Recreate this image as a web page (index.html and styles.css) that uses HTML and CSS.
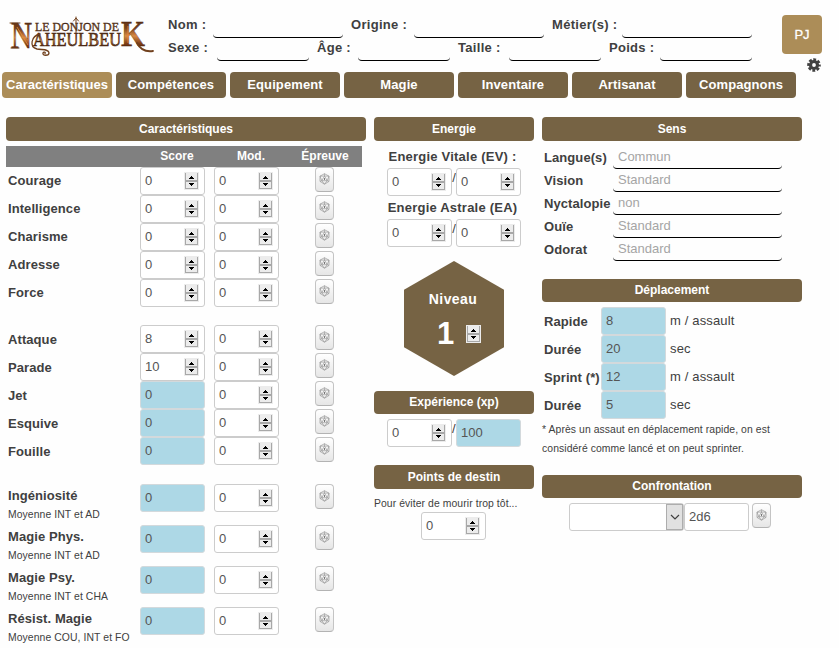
FILE: index.html
```html
<!DOCTYPE html>
<html lang="fr">
<head>
<meta charset="utf-8">
<title>Le Donjon de Naheulbeuk</title>
<link rel="stylesheet" href="styles.css">
</head>
<body>
<svg class="defs" width="0" height="0">
  <symbol id="spin" viewBox="0 0 15 18">
    <path fill="#ececec" d="M0 0h15v18H0z"/>
    <path fill="#a8a8a8" d="M1 1h1v16H1zM13 1h1v16h-1zM1 8h13v2H1zM1 16h13v1H1z"/>
    <path fill="#000" d="M7 4h1v1h1v1h1v1H5V6h1V5h1zM5 11h5v1H9v1H8v1H7v-1H6v-1H5z"/>
  </symbol>
  <symbol id="die" viewBox="0 0 11 12">
    <path fill="none" stroke="#999" stroke-width=".7" d="M5.500 .7 10 3.200v5.200l-4.500 2.800L1 8.400V3.200zM5.500 3 8.200 7.700H2.800zM5.500.7V3M1 3.200 5.500 3 10 3.200 8.200 7.700 10 8.400M1 3.200l1.800 4.500L1 8.400M2.800 7.700l2.700 3.500 2.700-3.500"/>
    <path fill="#777" d="M5 5h1v2H5z"/>
  </symbol>
</svg>

<header class="top">
  <svg class="logo" viewBox="0 0 148 46" width="148" height="46">
    <defs><linearGradient id="fire" x1="0" y1="0" x2="0" y2="1">
      <stop offset="0" stop-color="#4b240e"/><stop offset=".35" stop-color="#7b431b"/><stop offset=".55" stop-color="#d98a45"/><stop offset=".75" stop-color="#7a3a14"/><stop offset="1" stop-color="#2a1208"/>
    </linearGradient></defs>
    <g class="logo-text" fill="url(#fire)">
      <text x="4" y="35" font-size="37" textLength="21" lengthAdjust="spacingAndGlyphs">N</text>
      <text class="logo-mid" x="26" y="33" font-size="19" textLength="88" lengthAdjust="spacingAndGlyphs">AHEULBEU</text>
      <text x="114" y="33" font-size="36" textLength="24" lengthAdjust="spacingAndGlyphs">K</text>
      <text class="logo-small" x="28" y="17.500" font-size="11.500" textLength="84" lengthAdjust="spacingAndGlyphs">LE DONJON DE</text>
    </g>
    <g fill="none" stroke="#70401d" stroke-linecap="round">
      <path stroke-width="1.300" d="M33 21C24 23 22 34 30 36c6 1 12 0 12 4 0 3-7 3-6 0 .5-1.500 3-1 2 .5"/>
      <path stroke-width="1.800" d="M130 30c3 6 9 9 16 8"/>
      <path stroke-width="1" d="M69 4v16M66.500 8 69 5l2.500 3M3 10h10M4 35h8"/>
    </g>
    <path fill="none" stroke="#e98b36" stroke-width=".8" d="m10 14 11 18M121 13v17"/>
  </svg>
  <div class="identity">
    <div class="line"><label class="w45">Nom :</label><i class="long"></i><label class="w71">Origine :</label><i class="long"></i><label class="w78">Métier(s) :</label><i class="long"></i></div>
    <div class="line"><label class="w49">Sexe :</label><i></i><label class="w49 pad">Âge :</label><i></i><label class="w59 pad">Taille :</label><i></i><label class="w59 pad">Poids :</label><i></i></div>
  </div>
  <div class="side">
    <div class="pj">PJ</div>
    <svg class="gear" viewBox="0 0 14 14" width="14" height="14"><path fill="none" stroke="#404040" stroke-width="2.600" stroke-dasharray="2.800 1.520" stroke-dashoffset="1.400" d="M12.500 7A5.500 5.500 0 1 1 1.500 7a5.500 5.500 0 0 1 11 0"/><circle cx="7" cy="7" r="3.500" fill="none" stroke="#404040" stroke-width="3.200"/></svg>
  </div>
</header>

<nav class="tabs"><a class="on">Caractéristiques</a><a>Compétences</a><a>Equipement</a><a>Magie</a><a>Inventaire</a><a>Artisanat</a><a>Compagnons</a></nav>

<main class="sheet">
  <section>
    <h2>Caractéristiques</h2>
    <div class="row thead"><b></b><b>Score</b><b>Mod.</b><b>Épreuve</b></div>
    <div class="group">
      <div class="row"><label>Courage</label><span class="f">0<svg><use href="#spin"/></svg></span><span class="f">0<svg><use href="#spin"/></svg></span><span class="roll"><svg><use href="#die"/></svg></span></div>
      <div class="row"><label>Intelligence</label><span class="f">0<svg><use href="#spin"/></svg></span><span class="f">0<svg><use href="#spin"/></svg></span><span class="roll"><svg><use href="#die"/></svg></span></div>
      <div class="row"><label>Charisme</label><span class="f">0<svg><use href="#spin"/></svg></span><span class="f">0<svg><use href="#spin"/></svg></span><span class="roll"><svg><use href="#die"/></svg></span></div>
      <div class="row"><label>Adresse</label><span class="f">0<svg><use href="#spin"/></svg></span><span class="f">0<svg><use href="#spin"/></svg></span><span class="roll"><svg><use href="#die"/></svg></span></div>
      <div class="row"><label>Force</label><span class="f">0<svg><use href="#spin"/></svg></span><span class="f">0<svg><use href="#spin"/></svg></span><span class="roll"><svg><use href="#die"/></svg></span></div>
    </div>
    <div class="group second">
      <div class="row"><label>Attaque</label><span class="f">8<svg><use href="#spin"/></svg></span><span class="f">0<svg><use href="#spin"/></svg></span><span class="roll"><svg><use href="#die"/></svg></span></div>
      <div class="row"><label>Parade</label><span class="f">10<svg><use href="#spin"/></svg></span><span class="f">0<svg><use href="#spin"/></svg></span><span class="roll"><svg><use href="#die"/></svg></span></div>
      <div class="row"><label>Jet</label><span class="f calc">0</span><span class="f">0<svg><use href="#spin"/></svg></span><span class="roll"><svg><use href="#die"/></svg></span></div>
      <div class="row"><label>Esquive</label><span class="f calc">0</span><span class="f">0<svg><use href="#spin"/></svg></span><span class="roll"><svg><use href="#die"/></svg></span></div>
      <div class="row"><label>Fouille</label><span class="f calc">0</span><span class="f">0<svg><use href="#spin"/></svg></span><span class="roll"><svg><use href="#die"/></svg></span></div>
    </div>
    <div class="group third">
      <div class="row"><label>Ingéniosité<small>Moyenne INT et AD</small></label><span class="f calc">0</span><span class="f">0<svg><use href="#spin"/></svg></span><span class="roll"><svg><use href="#die"/></svg></span></div>
      <div class="row"><label>Magie Phys.<small>Moyenne INT et AD</small></label><span class="f calc">0</span><span class="f">0<svg><use href="#spin"/></svg></span><span class="roll"><svg><use href="#die"/></svg></span></div>
      <div class="row"><label>Magie Psy.<small>Moyenne INT et CHA</small></label><span class="f calc">0</span><span class="f">0<svg><use href="#spin"/></svg></span><span class="roll"><svg><use href="#die"/></svg></span></div>
      <div class="row"><label>Résist. Magie<small>Moyenne COU, INT et FO</small></label><span class="f calc">0</span><span class="f">0<svg><use href="#spin"/></svg></span><span class="roll"><svg><use href="#die"/></svg></span></div>
    </div>
  </section>

  <section>
    <h2>Energie</h2>
    <div class="energy">
      <label>Energie Vitale (EV) :</label>
      <div class="pair"><span class="f">0<svg><use href="#spin"/></svg></span><em>/</em><span class="f">0<svg><use href="#spin"/></svg></span></div>
      <label>Energie Astrale (EA)</label>
      <div class="pair"><span class="f">0<svg><use href="#spin"/></svg></span><em>/</em><span class="f">0<svg><use href="#spin"/></svg></span></div>
    </div>
    <div class="level"><b>Niveau</b><div><strong>1</strong><svg><use href="#spin"/></svg></div></div>
    <h2 class="short">Expérience (xp)</h2>
    <div class="pair xp"><span class="f">0<svg><use href="#spin"/></svg></span><em>/</em><span class="f calc">100</span></div>
    <h2>Points de destin</h2>
    <p class="hint">Pour éviter de mourir trop tôt...</p>
    <div class="fate"><span class="f">0<svg><use href="#spin"/></svg></span></div>
  </section>

  <section>
    <h2>Sens</h2>
    <div class="senses">
      <label>Langue(s)</label><i>Commun</i>
      <label>Vision</label><i>Standard</i>
      <label>Nyctalopie</label><i>non</i>
      <label>Ouïe</label><i>Standard</i>
      <label>Odorat</label><i>Standard</i>
    </div>
    <h2 class="short">Déplacement</h2>
    <div class="moves">
      <label>Rapide</label><span class="f calc">8</span><span class="unit">m / assault</span>
      <label>Durée</label><span class="f calc">20</span><span class="unit">sec</span>
      <label>Sprint (*)</label><span class="f calc">12</span><span class="unit">m / assault</span>
      <label>Durée</label><span class="f calc">5</span><span class="unit">sec</span>
    </div>
    <p class="note">* Après un assaut en déplacement rapide, on est<br>considéré comme lancé et on peut sprinter.</p>
    <h2 class="short">Confrontation</h2>
    <div class="versus"><span class="select"><span><svg viewBox="0 0 10 6" width="10" height="6"><path fill="none" stroke="#404040" stroke-width="1.200" d="m1 1 4 4 4-4"/></svg></span></span><span class="f">2d6</span><span class="roll"><svg><use href="#die"/></svg></span></div>
  </section>
</main>
</body>
</html>
```
FILE: styles.css
```css
* { box-sizing: border-box; }
body { margin: 0; width: 839px; height: 648px; overflow: hidden; background: #fefefe; color: #404040; font: 13px/20px "Liberation Sans", Arial, sans-serif; }
.defs { display: none; }
label { font-weight: bold; white-space: nowrap; letter-spacing: .08px; }
i, em { font-style: normal; }

.top { display: flex; height: 72px; }
.logo { margin: 13px 0 0 7px; }
.logo-text { font-family: "Liberation Serif", serif; font-weight: bold; stroke: #3c1d0b; stroke-width: .3; }
.logo-mid { font-weight: normal; stroke-width: .6; }
.logo-small { fill: #6b421f; font-weight: normal; }
.identity { width: 584px; margin: 15px 0 0 13px; }
.line { display: flex; height: 23px; line-height: 19px; }
.line label { padding-left: 8px; letter-spacing: .3px; }
.line label:first-child { padding-left: 0; }
.line i { width: 92px; height: 23px; border-bottom: 1px solid #000; border-radius: 4px; }
.line .long { width: 130px; }
.w45 { width: 45px; }
.w49 { width: 49px; }
.w59 { width: 59px; }
.w71 { width: 71px; }
.w78 { width: 78px; }
.side { width: 40px; margin: 15px 0 0 30px; display: flex; flex-direction: column; align-items: flex-end; }
.pj { width: 40px; height: 40px; border-radius: 4px; background: #ac8d58; color: #fff; text-align: center; line-height: 39px; -webkit-text-stroke: .3px #fff; }
.gear { margin: 4px 1px 0 0; flex: none; }

.tabs { display: flex; gap: 4px; margin-left: 2px; }
.tabs a { width: 110px; height: 26px; border-radius: 4px; background: #766344; color: #fff; font-weight: bold; letter-spacing: .1px; line-height: 25px; text-align: center; white-space: nowrap; }
.tabs .on { background: #ac8d58; letter-spacing: 0; }

.sheet { display: grid; grid-template-columns: 360px 160px 260px; gap: 8px; margin: 19px 0 0 6px; }
h2 { margin: 0; height: 24px; border-radius: 4px; background: #766344; color: #fff; font-size: 12px; line-height: 24px; text-align: center; }
h2.short { height: 23px; line-height: 23px; }

.row { display: grid; grid-template-columns: 134px 74px 74px 74px; width: 356px; height: 28px; }
.row label { padding: 4px 0 0 2px; }
.thead { height: 21px; margin-top: 5px; background: #808080; color: #fff; font-size: 12px; line-height: 20px; text-align: center; }
.second { margin-top: 18px; }
.second label { padding-top: 5px; }
.third { margin-top: 19px; }
.third .row { height: 41px; }
.third label { padding-top: 2px; }
small, .hint, .note { font-size: 10.400px; font-weight: normal; letter-spacing: .08px; }
small { display: block; line-height: 18px; }
.f { display: flex; align-items: center; justify-content: space-between; width: 65px; height: 28px; padding: 0 5px 0 4px; border: 1px solid #ccc; border-radius: 3px; background: #fff; color: #555; }
.f svg, .level svg { width: 15px; height: 18px; }
.calc { background: #add8e6; border-color: #d3d9dc; }
.roll { display: flex; align-items: center; justify-content: center; margin-left: 27px; width: 19px; height: 25px; padding-bottom: 1px; border: 1px solid #c4c4c4; border-bottom-color: #b3b3b3; border-radius: 4px; background: linear-gradient(#fff, #e6e6e6); }
.roll svg { width: 11px; height: 12px; }

.energy { padding-top: 5px; text-align: center; }
.energy label { display: block; height: 22px; line-height: 21px; padding-right: 3px; letter-spacing: .22px; }
.energy .pair + label { height: 23px; line-height: 23px; }
.pair { display: flex; margin-left: 13px; height: 28px; }
.pair em { width: 4px; line-height: 19px; }
.level { display: flex; flex-direction: column; align-items: center; width: 100px; height: 115px; margin: 14px 0 15px 30px; padding: 28px 2px 0 0; background: #766344; color: #fff; clip-path: polygon(50% 0, 100% 25%, 100% 75%, 50% 100%, 0 75%, 0 25%); }
.level b { font-size: 14px; letter-spacing: .4px; }
.level div { display: flex; align-items: center; gap: 12px; margin: 9px 0 0 12px; }
.level strong { font-size: 31px; line-height: 32px; }
.xp { margin: 5px 0 18px 13px; }
.hint { margin: 6px 0 0; height: 17px; line-height: 18px; white-space: nowrap; }
.fate { padding-left: 47px; }

.senses { display: grid; grid-template-columns: 71px 169px; grid-auto-rows: 23px; margin: 5px 0 18px; }
.senses label { padding: 2px 0 0 2px; }
.senses i { padding: 1px 0 0 5px; border-bottom: 1px solid #000; border-radius: 4px; color: #a5a5a5; }
.moves { display: grid; grid-template-columns: 59px 65px auto; grid-auto-rows: 28px; margin-top: 5px; }
.moves label { padding: 5px 0 0 2px; }
.unit { padding: 4px 0 0 4px; letter-spacing: .15px; }
.note { margin: 1px 0 17px; line-height: 19px; white-space: nowrap; }
.versus { display: flex; margin: 5px 0 0 27px; }
.versus .f { margin-right: 3px; }
.versus .roll { margin-left: 0; }
.select { display: flex; justify-content: flex-end; width: 115px; height: 28px; border: 1px solid #ccc; border-radius: 3px; background: #fff; }
.select span { display: flex; align-items: center; justify-content: center; width: 17px; border: 1px solid #adadad; background: #e1e1e1; }
```
